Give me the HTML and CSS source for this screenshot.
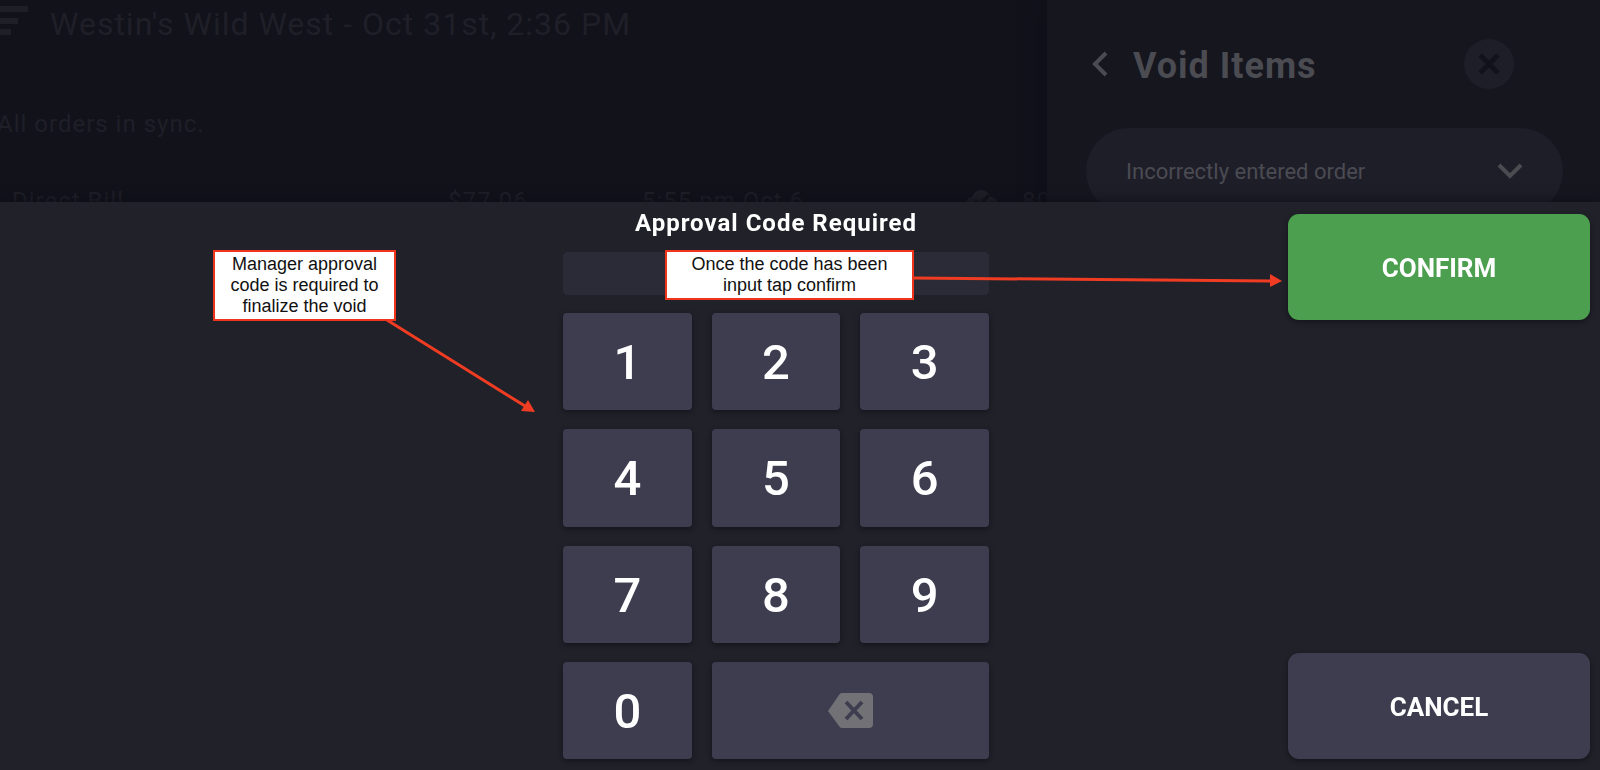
FILE: index.html
```
<!DOCTYPE html>
<html lang="en">
<head>
<meta charset="utf-8">
<meta name="viewport" content="width=device-width, initial-scale=1">
<title>Void Items - Approval Code Required</title>
<link rel="stylesheet" href="styles.css">
</head>
<body>
<div class="app">
  <main class="orders">
    <header class="orders-header">
      <svg class="sort-icon" width="28" height="32" viewBox="0 0 28 32" aria-hidden="true"><path d="M0 0h28v6H0zM0 12h18v6H0zM0 23h11v6H0z"/></svg>
      <h1 class="orders-title">Westin's Wild West - Oct 31st, 2:36 PM</h1>
    </header>
    <p class="sync-status">All orders in sync.</p>
    <div class="order-row">
      <span>Direct Bill</span>
      <span>$77.06</span>
      <span>5:55 pm Oct 6</span>
      <svg class="cloud-icon" width="32" height="24" viewBox="0 0 32 24" aria-hidden="true"><path class="cloud" d="M7 22a7 7 0 0 1-1-14Q9 1 15 1t10 7a7 7 0 0 1 0 14z"/><path class="cloud-check" d="M9 12l5 4 9-10"/></svg>
      <span>80</span>
    </div>
  </main>
  <aside class="void-panel">
    <header class="void-header">
      <button class="back-button" type="button" aria-label="Back"><svg width="16" height="26" viewBox="0 0 16 26" aria-hidden="true"><path d="M14 2L3 13l11 11"/></svg></button>
      <h2 class="void-title">Void Items</h2>
      <button class="close-button" type="button" aria-label="Close"><svg width="22" height="22" viewBox="0 0 22 22" aria-hidden="true"><path d="M2 2l18 18M20 2L2 20"/></svg></button>
    </header>
    <div class="reason">
      <select class="reason-select" aria-label="Void reason"><option>Incorrectly entered order</option></select>
      <svg class="reason-arrow" width="26" height="18" viewBox="0 0 26 18" aria-hidden="true"><path d="M2 2l11 11L24 2"/></svg>
    </div>
  </aside>
</div>

<section class="approval" role="dialog" aria-labelledby="approval-title">
  <form class="approval-form">
    <label class="approval-title" id="approval-title" for="code">Approval Code Required</label>
    <input class="code-input" id="code" type="password" autocomplete="off">
    <div class="keypad">
      <button class="key" type="button">1</button>
      <button class="key" type="button">2</button>
      <button class="key" type="button">3</button>
      <button class="key" type="button">4</button>
      <button class="key" type="button">5</button>
      <button class="key" type="button">6</button>
      <button class="key" type="button">7</button>
      <button class="key" type="button">8</button>
      <button class="key" type="button">9</button>
      <button class="key" type="button">0</button>
      <button class="key key-wide" type="button" aria-label="Backspace"><svg width="45" height="35" viewBox="0 0 45 35" aria-hidden="true"><path class="erase-body" d="M14 0h27a4 4 0 0 1 4 4v27a4 4 0 0 1-4 4H14q-2 0-3-2L0 18 11 2q1-2 3-2z"/><path class="erase-cross" d="M18 9l16 17M34 9L18 26"/></svg></button>
    </div>
  </form>
  <div class="actions">
    <button class="action action-confirm" type="button">CONFIRM</button>
    <button class="action" type="button">CANCEL</button>
  </div>
</section>

<div class="notes">
  <svg class="note-arrows" width="1600" height="770" viewBox="0 0 1600 770" aria-hidden="true">
    <path class="arrow-line" d="M387 320L525 406M913 278L1271 281"/>
    <path class="arrow-head" d="M535 412l-14-1 7-11zM1282 281l-12 6v-13z"/>
  </svg>
  <p class="note note-code">Manager approval code is required to finalize the void</p>
  <p class="note note-confirm">Once the code has been input tap confirm</p>
</div>
</body>
</html>
```
FILE: styles.css
```
* {
  box-sizing: border-box;
}

body {
  margin: 0;
  background: #12121b;
  color: #fff;
  font-family: Roboto, sans-serif;
  overflow: hidden;
}

h1, h2, p {
  margin: 0;
}

button, input, select {
  margin: 0;
  border: 0;
  padding: 0;
  color: inherit;
  font-family: inherit;
}

svg {
  display: block;
}

/* Dimmed screen behind the dialog */
.app {
  display: flex;
  height: 100vh;
}

.orders {
  flex: 1;
  min-width: 0;
  overflow: hidden;
  color: #1f1f28;
}

.orders-header {
  display: flex;
  gap: 22px;
  padding-top: 4px;
}

.sort-icon {
  margin-top: 2px;
  fill: currentColor;
}

.orders-title {
  font-size: 32px;
  line-height: 40px;
  font-weight: 400;
  letter-spacing: 1px;
}

.sync-status {
  margin: 64px 0 0 -3px;
  font-size: 24px;
  line-height: 32px;
  letter-spacing: 1px;
}

.order-row {
  display: grid;
  grid-template-columns: 436px 194px 324px 56px 1fr;
  margin-top: 45px;
  padding-left: 12px;
  font-size: 24px;
  line-height: 32px;
  letter-spacing: 1px;
  white-space: nowrap;
}

.cloud-icon {
  margin-top: 4px;
}

.cloud {
  fill: currentColor;
}

.cloud-check {
  fill: none;
  stroke: #12121b;
  stroke-width: 3;
}

.void-panel {
  width: 553px;
  padding: 39px 37px 0 39px;
  background: #16161f;
  box-shadow: 0 0 20px #0e0e16;
  color: #4b4b52;
  z-index: 0;
}

.void-header {
  display: flex;
  align-items: center;
  padding: 0 49px 0 6px;
}

.back-button {
  background: none;
}

.back-button path,
.reason-arrow path {
  fill: none;
  stroke: currentColor;
  stroke-width: 4;
}

.void-title {
  flex: 1;
  margin-left: 25px;
  padding-top: 4px;
  font-size: 36px;
  line-height: 46px;
  font-weight: 700;
  letter-spacing: 1px;
}

.close-button {
  display: grid;
  place-items: center;
  width: 50px;
  height: 50px;
  border-radius: 50%;
  background: #1e1e28;
}

.close-button path {
  stroke: #12121b;
  stroke-width: 5;
}

.reason {
  position: relative;
  margin-top: 39px;
}

.reason-select {
  width: 100%;
  height: 86px;
  padding: 0 80px 0 40px;
  border-radius: 43px;
  appearance: none;
  background: #1e1e29;
  font-size: 22px;
}

.reason-arrow {
  position: absolute;
  top: 35px;
  right: 40px;
  pointer-events: none;
}

/* Approval dialog */
.approval {
  position: fixed;
  right: 0;
  bottom: 0;
  left: 0;
  z-index: 1;
  display: grid;
  grid-template-columns: 563fr 426fr 611fr;
  padding-bottom: 11px;
  background: #21212a;
  box-shadow: 0 0 12px #0e0e16;
}

.approval-form {
  grid-column: 2;
  display: flex;
  flex-direction: column;
  padding-top: 4px;
}

.approval-title {
  font-size: 24px;
  line-height: 34px;
  font-weight: 700;
  letter-spacing: 1px;
  text-align: center;
}

.code-input {
  height: 43px;
  margin: 12px 0 18px;
  padding: 0 12px;
  border-radius: 5px;
  background: #2a2b36;
  font-size: 24px;
}

.keypad {
  display: grid;
  grid-template-columns: repeat(3, 1fr);
  grid-auto-rows: 1fr;
  gap: 19px 20px;
  height: 446px;
}

.key,
.action {
  display: grid;
  place-items: center;
  background: #3d3d4f;
  box-shadow: 0 2px 5px #14141b;
}

.key {
  padding-top: 2px;
  border-radius: 4px;
  font-size: 49px;
  font-weight: 500;
}

.key-wide {
  grid-column: span 2;
  padding-top: 0;
}

.erase-body {
  fill: #717176;
}

.erase-cross {
  stroke: #3d3d4f;
  stroke-width: 4;
}

.actions {
  display: flex;
  flex-direction: column;
  justify-content: space-between;
  align-items: flex-end;
  padding: 12px 10px 0 0;
}

.action {
  width: 302px;
  height: 106px;
  padding-top: 2px;
  border-radius: 11px;
  font-size: 26px;
  font-weight: 700;
}

.action-confirm {
  background: #4c9f4f;
}

/* Instruction notes drawn over the screen */
.notes {
  position: absolute;
  top: 0;
  left: 0;
  z-index: 2;
  pointer-events: none;
}

.arrow-line {
  fill: none;
  stroke: #f03c22;
  stroke-width: 3;
}

.arrow-head {
  fill: #f03c22;
}

.note {
  position: absolute;
  top: 250px;
  border: 2px solid #f0341c;
  padding: 2px 10px;
  background: #fff;
  color: #111;
  font-family: "Liberation Sans", Arial, sans-serif;
  font-size: 18px;
  line-height: 21px;
  text-align: center;
}

.note-code {
  left: 213px;
  width: 183px;
}

.note-confirm {
  left: 665px;
  width: 249px;
}
```
